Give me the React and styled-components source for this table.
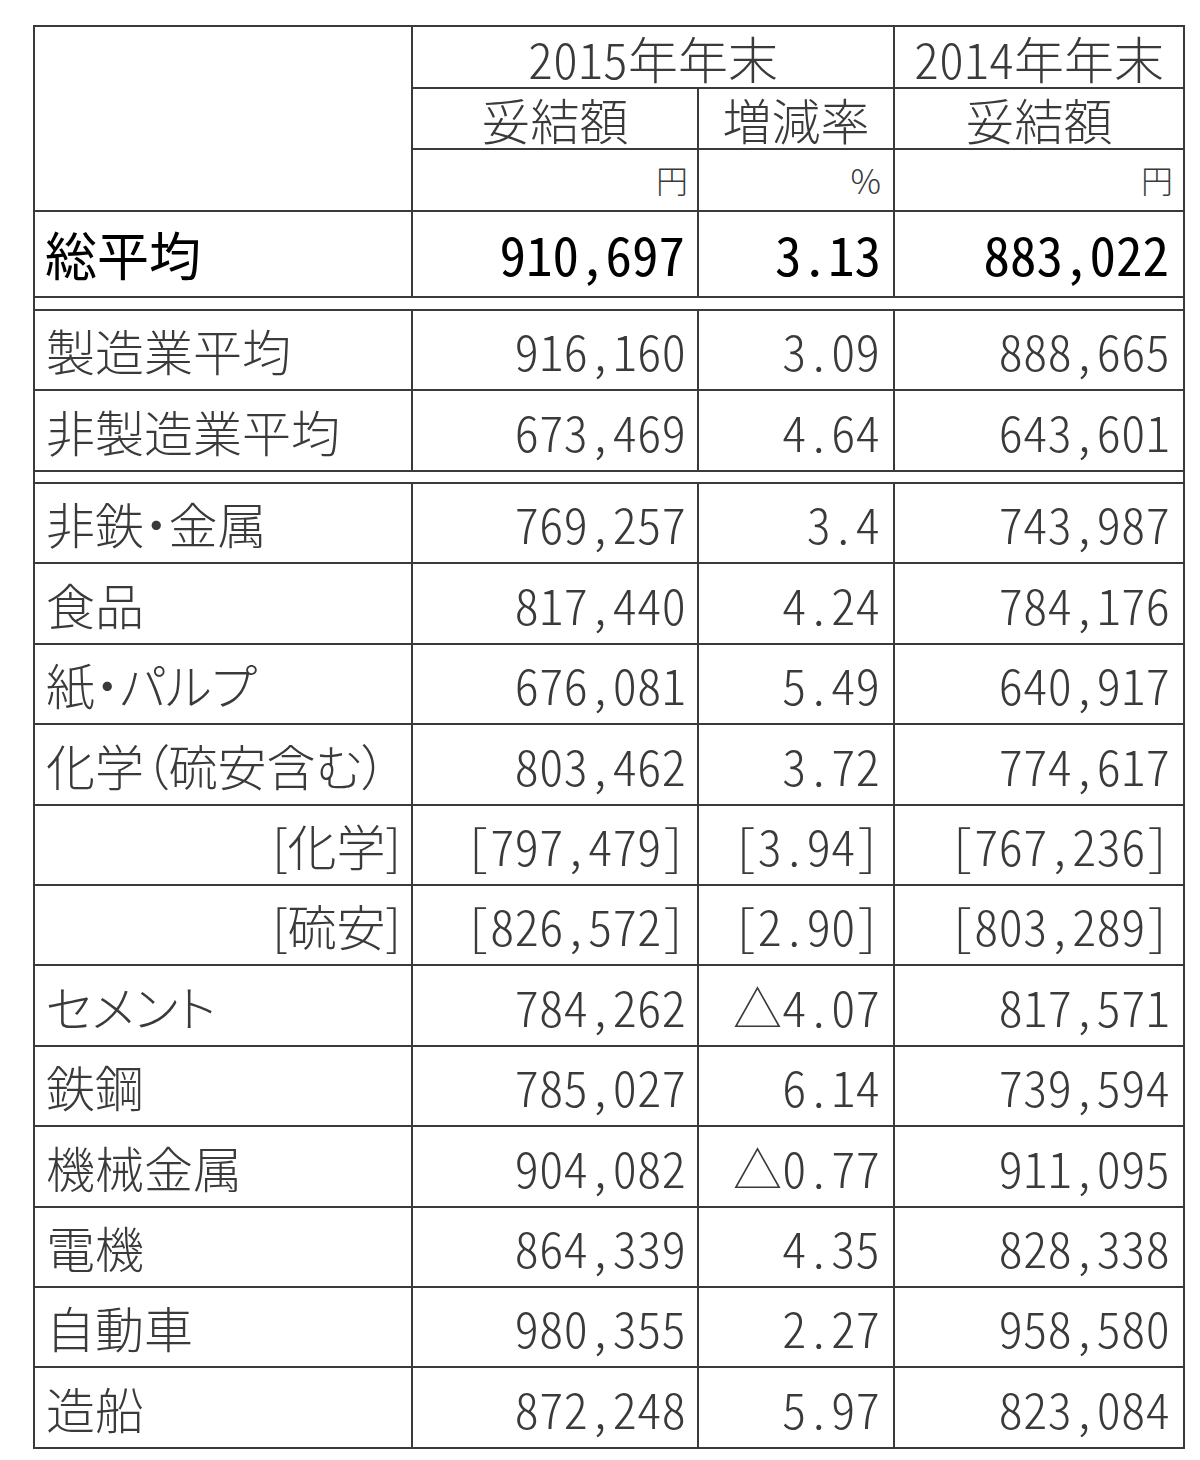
import React from "react";
import styled, { createGlobalStyle } from "styled-components";

const line = "#3a3a3a";

const GlobalStyle = createGlobalStyle`
  body {
    margin: 0;
    background: #ffffff;
  }
`;

const Page = styled.div`
  padding: 25px 0 0 33px;
  font-family: "Noto Sans CJK JP", "Noto Sans", sans-serif;
`;

const Table = styled.table`
  border-collapse: collapse;
  table-layout: fixed;
  width: 1150px;
  color: #333;
`;

const Row = styled.tr`
  height: ${(p) => p.$h}px;
`;

const Cell = styled.td`
  border: 2px solid ${line};
  padding: 0 ${(p) => (p.$pad != null ? p.$pad : 13)}px;
  text-align: ${(p) => p.$align || "right"};
  font-size: ${(p) => p.$size || 49}px;
  font-weight: ${(p) => (p.$bold ? 400 : 300)};
  color: ${(p) => (p.$bold ? "#000" : "#3a3a3a")};
  line-height: 1.05;
  white-space: nowrap;
  vertical-align: middle;
  font-feature-settings: ${(p) => (p.$label ? '"palt" 1' : '"hwid" 1')};
`;

const Gap = styled.td`
  border-left: 2px solid ${line};
  border-right: 2px solid ${line};
  padding: 0;
`;

const summary = [
  ["製造業平均", "916,160", "3.09", "888,665"],
  ["非製造業平均", "673,469", "4.64", "643,601"],
];

const sectors = [
  ["非鉄・金属", "769,257", "3.4", "743,987"],
  ["食品", "817,440", "4.24", "784,176"],
  ["紙・パルプ", "676,081", "5.49", "640,917"],
  ["化学（硫安含む）", "803,462", "3.72", "774,617"],
  ["[化学]", "[797,479]", "[3.94]", "[767,236]", true],
  ["[硫安]", "[826,572]", "[2.90]", "[803,289]", true],
  ["セメント", "784,262", "△4.07", "817,571"],
  ["鉄鋼", "785,027", "6.14", "739,594"],
  ["機械金属", "904,082", "△0.77", "911,095"],
  ["電機", "864,339", "4.35", "828,338"],
  ["自動車", "980,355", "2.27", "958,580"],
  ["造船", "872,248", "5.97", "823,084"],
];

const DataRow = ({ h, item }) => {
  const [label, a, b, c, sub] = item;
  return (
    <Row $h={h}>
      <Cell $label $align={sub ? "right" : "left"} $pad={sub ? 10 : 11}>
        {label}
      </Cell>
      <Cell $pad={11}>{a}</Cell>
      <Cell>{b}</Cell>
      <Cell>{c}</Cell>
    </Row>
  );
};

export default function App() {
  return (
    <Page>
      <GlobalStyle />
      <Table>
        <colgroup>
          <col style={{ width: 378 }} />
          <col style={{ width: 286 }} />
          <col style={{ width: 196 }} />
          <col style={{ width: 290 }} />
        </colgroup>
        <tbody>
          <Row $h={62}>
            <Cell rowSpan={3} />
            <Cell colSpan={2} $align="center" $size={50}>
              2015年年末
            </Cell>
            <Cell $align="center" $size={50} $pad={4}>
              2014年年末
            </Cell>
          </Row>
          <Row $h={61}>
            <Cell $align="center">妥結額</Cell>
            <Cell $align="center">増減率</Cell>
            <Cell $align="center">妥結額</Cell>
          </Row>
          <Row $h={62}>
            <Cell $size={32} $pad={9}>円</Cell>
            <Cell $label $size={34} $pad={12}>%</Cell>
            <Cell $size={32} $pad={10}>円</Cell>
          </Row>
          <Row $h={86}>
            <Cell $label $bold $align="left" $size={52} $pad={10}>
              総平均
            </Cell>
            <Cell $bold $size={53} $pad={12}>910,697</Cell>
            <Cell $bold $size={53} $pad={12}>3.13</Cell>
            <Cell $bold $size={53} $pad={14}>883,022</Cell>
          </Row>
          <Row $h={13}>
            <Gap colSpan={4} />
          </Row>
          {summary.map((item, i) => (
            <DataRow key={item[0]} h={i === 0 ? 80 : 81} item={item} />
          ))}
          <Row $h={12}>
            <Gap colSpan={4} />
          </Row>
          {sectors.map((item) => (
            <DataRow key={item[0]} h={80.4} item={item} />
          ))}
        </tbody>
      </Table>
    </Page>
  );
}
